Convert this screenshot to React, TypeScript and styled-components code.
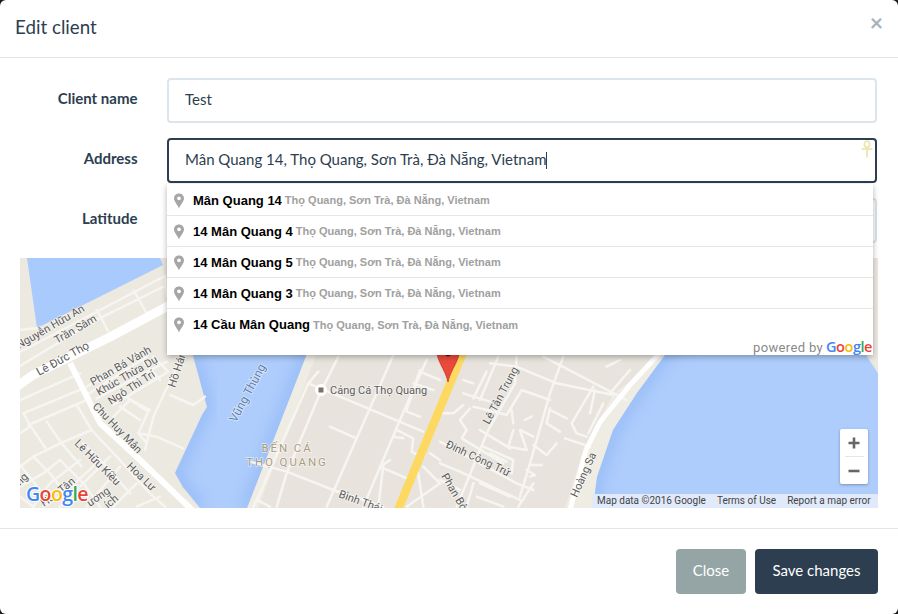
import React from "react";
import styled, { createGlobalStyle } from "styled-components";

const Global = createGlobalStyle`
  html, body { margin: 0; padding: 0; background: #1c1c1c; }
  #root { width: 898px; height: 614px; overflow: hidden; }
`;

const Modal = styled.div`
  width: 898px; height: 614px; background: #fff; border-radius: 6px; overflow: hidden;
  font-family: Lato, "Noto Sans", sans-serif; font-size: 15px; color: #2c3e50;
  display: flex; flex-direction: column;
`;
const Header = styled.header`
  box-sizing: border-box; height: 58px; display: flex; justify-content: space-between; align-items: flex-start;
  padding: 15px; border-bottom: 1px solid #e5e5e5;
`;
const Title = styled.h4`
  margin: 0; font-size: 18.75px; font-weight: 400; line-height: 24px;
`;
const CloseX = styled.span`
  font-size: 23px; font-weight: 700; line-height: 15px; color: #a9b2b8;
`;
const Body = styled.div`
  position: relative; padding: 20px; display: flex; flex-direction: column; gap: 15px;
`;
const Row = styled.div`
  display: grid; grid-template-columns: 147px 1fr; margin-right: 1px; height: 45px;
`;
const Label = styled.label`
  font-weight: 700; text-align: right; padding: 10px 29.5px 0 0; line-height: 21px;
`;
const Input = styled.input`
  box-sizing: border-box; width: 100%; height: 45px; padding: 0 16px 3px; border: 2px solid #dce4ec;
  border-radius: 4px; outline: none; background: #fff; color: #2c3e50;
  font-family: inherit; font-size: 15px;
`;
const FocusField = styled.div`
  position: relative; box-sizing: border-box; height: 45px; padding: 0 16px 3px; border: 2px solid #2c3e50;
  border-radius: 4px; display: flex; align-items: center; white-space: nowrap; font-size: 15px;
`;
const Caret = styled.span`
  display: inline-block; width: 1px; height: 17px; background: #2c3e50; margin-top: 3px;
`;
const AnkhIcon = styled.svg`
  position: absolute; right: 2px; top: 0; width: 12px; height: 18px;
`;
const Dropdown = styled.div`
  position: absolute; left: 167px; top: 126px; width: 706px; height: 171px; box-sizing: border-box; padding-top: 1px;
  background: #fff; z-index: 5; box-shadow: 0 2px 6px rgba(0,0,0,.3);
  font-family: "Liberation Sans", Arial, sans-serif; display: flex; flex-direction: column;
`;
const Option = styled.div`
  flex: none; height: 31px; box-sizing: border-box; display: flex; align-items: center; padding: 0 0 0 6px;
  border-bottom: 1px solid #e6e6e6; white-space: nowrap;
  &:nth-child(5) { border-bottom: 0; }
`;
const PinBox = styled.svg`
  width: 12px; height: 16px; margin: 1px 8px 0 0; flex: none;
`;
const MainText = styled.b`
  font-size: 13px; color: #000; margin-right: 3px;
`;
const SubText = styled.span`
  font-size: 11px; font-weight: 700; color: #a0a0a0;
`;
const Powered = styled.div`
  display: flex; justify-content: flex-end; align-items: baseline; padding: 0 1px 0 0; line-height: 13px;
  font-family: Roboto, sans-serif; font-size: 13px; color: #8a8a8a; letter-spacing: .35px;
`;
const Goog = styled.span`
  margin-left: 3px; font-family: "Open Sans", sans-serif; font-size: 14.5px; font-weight: 600; letter-spacing: -.45px;
`;
const Letter = styled.span<{ $c: string }>`color: ${p => p.$c};`;

const MapBox = styled.div`
  position: relative; height: 250px; overflow: hidden; background: #e8e4dd;
`;
const MapSvg = styled.svg`
  display: block; width: 858px; height: 250px;
`;
const Attribution = styled.div`
  position: absolute; right: 0; bottom: 0; width: 286px; height: 14px; box-sizing: border-box; background: #e1eafb;
  font-family: Roboto, sans-serif; font-size: 10px; line-height: 14px; color: #444; padding-left: 5px;
  display: flex; gap: 11px; white-space: nowrap;
`;
const Zoom = styled.div`
  position: absolute; left: 820px; top: 171px; width: 28px; height: 55px; background: #fff; border-radius: 2px;
  box-shadow: 0 1px 3px rgba(0,0,0,.3); display: flex; flex-direction: column; align-items: center;
`;
const ZoomBtn = styled.svg`
  width: 28px; height: 27px; display: block;
`;
const ZoomSep = styled.div`
  width: 19px; height: 1px; background: #e6e6e6;
`;
const Footer = styled.footer`
  margin-top: auto; border-top: 1px solid #e5e5e5; padding: 20px; display: flex; justify-content: flex-end; gap: 9px;
`;
const Btn = styled.button<{ $dark?: boolean }>`
  width: ${p => (p.$dark ? 123 : 70)}px; height: 45px; border: 0; border-radius: 4px; padding: 0 0 3px; color: #fff;
  font-family: inherit; font-size: 15px;
  background: ${p => (p.$dark ? "#2c3e50" : "#95a5a6")};
`;

const MapLabel = styled.text<{ $c?: string; $s?: number }>`
  font-family: Roboto, sans-serif; font-size: ${p => p.$s ?? 11}px; fill: ${p => p.$c ?? "#5b5b5b"};
  stroke: rgba(255,255,255,.55); stroke-width: 1.6px; paint-order: stroke;
`;
const DistrictLabel = styled.text`
  font-family: Roboto, sans-serif; font-size: 11.5px; letter-spacing: 1.9px; fill: #a99c82; text-anchor: middle;
  stroke: rgba(255,255,255,.6); stroke-width: 1.5px; paint-order: stroke;
`;
const GoogleMark = styled.text`
  font-family: "Open Sans", sans-serif; font-size: 19.5px; font-weight: 600; letter-spacing: -.6px;
  stroke: #fff; stroke-width: 2px; paint-order: stroke;
`;

const options = ["Mân Quang 14", "14 Mân Quang 4", "14 Mân Quang 5", "14 Mân Quang 3", "14 Cầu Mân Quang"];

const upper = [
  "20,352 100,310 165,276", "20,366 96,320 165,286", "97,310 108,331", "134,291 146,312", "165,276 167,296",
  "20,330 37,328",
];
const zoneLeft = [
  "0,150 180,70", "10,190 190,115", "25,225 200,150", "0,250 30,230", "200,110 310,50", "200,135 380,20",
  "230,145 440,35", "280,165 445,65", "10,190 30,225 80,300", "80,215 125,280 185,350", "170,165 215,240",
  "215,240 120,280 40,320 0,350", "40,320 90,370 130,420", "215,240 290,320 390,430 435,470",
  "280,200 330,150 385,185 355,250 380,280", "300,170 360,210", "325,145 390,180", "355,250 410,260 490,295",
  "480,30 400,200 375,300", "450,135 520,165 555,140", "0,410 70,370 120,330", "180,330 90,400 40,470",
  "230,340 120,440 70,470", "270,320 170,420 120,470", "300,350 200,470", "350,400 280,470", "420,440 350,470",
  "0,345 60,420", "90,370 150,450", "120,330 190,400 240,470", "190,280 260,350 330,430", "0,440 40,470",
  "440,60 400,20", "420,90 350,10",
];
const zoneMid = [
  "205,65 175,100 30,430 10,470", "265,20 210,130 110,370 80,470", "175,100 520,245", "430,15 230,470",
  "240,230 320,265", "0,335 110,365 250,420 400,470", "530,30 450,210 340,470", "510,60 470,180",
  "510,65 570,90", "490,100 550,120", "470,185 510,200", "440,240 490,265 485,305 510,320", "430,260 460,265",
  "420,330 390,350 470,385", "400,345 385,470", "520,350 570,400", "500,340 520,470", "470,470 570,400",
  "540,310 570,330", "20,450 60,470",
];
const zoneRight = [
  "175,20 120,150", "140,65 100,145", "230,20 225,100 145,240 50,470", "150,40 230,50 350,100 520,135",
  "370,20 330,130 270,340 240,440", "310,20 560,150", "70,90 100,100", "70,130 150,155", "0,190 40,190 70,165",
  "100,170 200,195 245,120 330,150", "60,210 90,175", "60,210 80,240 65,265 190,340", "0,275 230,400 280,420",
  "0,340 60,365 240,450", "120,240 210,295", "130,290 220,330 215,370", "150,310 200,335", "215,180 220,220",
  "255,210 275,200", "220,240 205,290 260,300 240,240 280,260", "280,285 320,315 350,280",
  "330,175 320,220 360,245", "330,180 380,205", "375,265 450,290", "460,110 395,220 410,250 440,260",
  "465,120 450,190", "490,160 445,250", "270,345 305,345", "260,360 285,375 270,380", "280,400 235,470",
  "100,400 80,470", "0,390 60,420", "500,50 540,30", "510,130 570,60", "120,400 210,440", "110,440 190,470",
];

const riverPts = "165,240 193,355 207,407 202,415 175,473 183,487 200,508 247,508 320,320 330,240";
const seaPts = "700,330 665,355 637,393 613,430 597,477 593,508 878,508 878,373 867,357 860,330";

export default function App() {
  return (
    <Modal>
      <Global />
      <Header>
        <Title>Edit client</Title>
        <CloseX>×</CloseX>
      </Header>
      <Body>
        <Row>
          <Label>Client name</Label>
          <Input defaultValue="Test" />
        </Row>
        <Row>
          <Label>Address</Label>
          <FocusField>
            Mân Quang 14, Thọ Quang, Sơn Trà, Đà Nẵng, Vietnam<Caret />
            <AnkhIcon viewBox="0 0 12 18">
              <g fill="none" stroke="#e9e7ae" strokeWidth="1.7">
                <ellipse cx="6" cy="4.2" rx="2.6" ry="3.2" />
                <path d="M0.5 9.2H11.5M6 7.4V17.5" />
              </g>
            </AnkhIcon>
          </FocusField>
        </Row>
        <Row>
          <Label>Latitude</Label>
          <Input />
        </Row>
        <Dropdown>
          {options.map(t => (
            <Option key={t}>
              <PinBox viewBox="0 0 12 16">
                <path fill="#a6a6a6" fillRule="evenodd" d="M6 0.5C2.9 0.5 1 2.7 1 5.3 1 8.6 4.6 11.8 6 15.5 7.4 11.8 11 8.6 11 5.3 11 2.7 9.1 0.5 6 0.5ZM6 3.4a1.9 1.9 0 1 1 0 3.8 1.9 1.9 0 0 1 0-3.8Z" />
              </PinBox>
              <MainText>{t}</MainText>
              <SubText>Thọ Quang, Sơn Trà, Đà Nẵng, Vietnam</SubText>
            </Option>
          ))}
          <Powered>
            powered by
            <Goog>
              <Letter $c="#4285f4">G</Letter><Letter $c="#ea4335">o</Letter><Letter $c="#fbbc05">o</Letter>
              <Letter $c="#4285f4">g</Letter><Letter $c="#34a853">l</Letter><Letter $c="#ea4335">e</Letter>
            </Goog>
          </Powered>
        </Dropdown>
        <MapBox>
          <MapSvg viewBox="20 258 858 250">
            <defs>
              <clipPath id="riverClip"><polygon points={riverPts} /></clipPath>
              <clipPath id="seaClip"><polygon points={seaPts} /></clipPath>
              <filter id="soft" x="-30%" y="-30%" width="160%" height="160%"><feGaussianBlur stdDeviation="7" /></filter>
            </defs>
            <rect x="20" y="258" width="858" height="250" fill="#e8e4dd" />
            <polygon points="20,258 27,258 37,328 163,265 170,300 190,350 210,410 204,420 178,475 182,488 205,508 20,508" fill="#ece9e1" />
            <polygon points="310,340 247,508 258,508 320,345" fill="#efece4" />
            <polygon points="680,340 613,395 585,445 565,508 596,508 600,470 625,415 700,340" fill="#efece4" />
            <polygon points="27,258 160,258 163,265 37,328" fill="#a9cafc" />
            <polygon points={riverPts} fill="#aecdfc" />
            <g clipPath="url(#riverClip)">
              <polyline points="193,355 207,407 202,415 175,473 183,487 200,508" fill="none" stroke="#8db4f4" strokeWidth="12" filter="url(#soft)" opacity=".7" />
              <polyline points="320,320 247,508" fill="none" stroke="#8db4f4" strokeWidth="12" filter="url(#soft)" opacity=".7" />
            </g>
            <polygon points={seaPts} fill="#aecdfc" />
            <g clipPath="url(#seaClip)">
              <polyline points="700,330 665,355 637,393 613,430 597,477 593,508" fill="none" stroke="#8db4f4" strokeWidth="12" filter="url(#soft)" opacity=".7" />
            </g>
            <polygon points="873,258 878,258 878,373 867,355" fill="#ece9e1" />
            <g fill="none" stroke="#f7f5f1" strokeLinejoin="round" strokeLinecap="round">
              <g strokeWidth="2.4">{upper.map(p => <polyline key={p} points={p} />)}</g>
              <g transform="translate(20 350) scale(.3333)" strokeWidth="7.5">{zoneLeft.map(p => <polyline key={p} points={p} />)}</g>
              <g transform="translate(250 350) scale(.3333)" strokeWidth="7.5">{zoneMid.map(p => <polyline key={p} points={p} />)}</g>
              <g transform="translate(440 350) scale(.3333)" strokeWidth="7.5">{zoneRight.map(p => <polyline key={p} points={p} />)}</g>
            </g>
            <g fill="none" stroke="#fff" strokeLinejoin="round">
              <polyline points="16,387 33,375 110,337 170,305" strokeWidth="9" />
              <polyline points="70,363 100,423 140,460 192,510" strokeWidth="6" />
              <polyline points="667,345 630,385 600,422 586,450 570,510" strokeWidth="5" />
            </g>
            <polyline points="466,345 398,510" fill="none" stroke="#fdd962" strokeWidth="8.5" />
            <path d="M436,345 H460 C460,362 451,368 448,382 C445,368 436,362 436,345Z" fill="#ea4a3c" stroke="#c9392b" strokeWidth=".8" />
            <circle cx="448" cy="354" r="2.5" fill="#5a1510" />
            <circle cx="321" cy="390" r="6" fill="#fff" />
            <rect x="318.5" y="387.5" width="5" height="5" fill="#7d7169" />
            <MapLabel x="330" y="394">Cảng Cá Thọ Quang</MapLabel>
            <MapLabel transform="translate(19,349) rotate(-30)">Nguyễn Hữu An</MapLabel>
            <MapLabel transform="translate(57,344) rotate(-30)">Trần Sâm</MapLabel>
            <MapLabel transform="translate(39,376) rotate(-29)" $s={11.5}>Lê Đức Thọ</MapLabel>
            <MapLabel transform="translate(93,386) rotate(-30)">Phan Bá Vành</MapLabel>
            <MapLabel transform="translate(99,396) rotate(-30)">Khúc Thừa Dụ</MapLabel>
            <MapLabel transform="translate(111,405) rotate(-33)">Ngô Thì Trí</MapLabel>
            <MapLabel transform="translate(175,388) rotate(-72)">Hồ Hán</MapLabel>
            <MapLabel transform="translate(92,407) rotate(46)">Chu Huy Mân</MapLabel>
            <MapLabel transform="translate(74,444) rotate(45)">Lê Hữu Kiều</MapLabel>
            <MapLabel transform="translate(126,467) rotate(44)">Hoa Lư</MapLabel>
            <MapLabel transform="translate(62,494) rotate(-40)">Tân</MapLabel>
            <MapLabel transform="translate(20,486) rotate(-45)">ng</MapLabel>
            <MapLabel transform="translate(44,507) rotate(-35)">Hồ</MapLabel>
            <MapLabel transform="translate(90,507) rotate(-35)">ương</MapLabel>
            <MapLabel transform="translate(108,509) rotate(-40)">ích</MapLabel>
            <MapLabel transform="translate(236,423) rotate(-62)" $c="#5f7ea6" $s={12}>Vũng Thùng</MapLabel>
            <DistrictLabel x="287" y="452">BẾN CÁ</DistrictLabel>
            <DistrictLabel x="287" y="466">THỌ QUANG</DistrictLabel>
            <MapLabel transform="translate(338,497) rotate(20)">Bình Thái</MapLabel>
            <MapLabel transform="translate(489,425) rotate(-62)">Lê Tân Trung</MapLabel>
            <MapLabel transform="translate(445,447) rotate(25)">Đinh Công Trứ</MapLabel>
            <MapLabel transform="translate(441,476) rotate(60)">Phan Bội</MapLabel>
            <MapLabel transform="translate(577,498) rotate(-66)">Hoàng Sa</MapLabel>
            <GoogleMark x="26" y="501">
              <tspan fill="#4285f4">G</tspan><tspan fill="#ea4335">o</tspan><tspan fill="#fbbc05">o</tspan>
              <tspan fill="#4285f4">g</tspan><tspan fill="#34a853">l</tspan><tspan fill="#ea4335">e</tspan>
            </GoogleMark>
          </MapSvg>
          <Attribution>
            <span>Map data ©2016 Google</span><span>Terms of Use</span><span>Report a map error</span>
          </Attribution>
          <Zoom>
            <ZoomBtn viewBox="0 0 28 27"><path d="M8.5 14h11M14 8.5v11" stroke="#666" strokeWidth="2.6" /></ZoomBtn>
            <ZoomSep />
            <ZoomBtn viewBox="0 0 28 27"><path d="M8.5 14h11" stroke="#666" strokeWidth="2.6" /></ZoomBtn>
          </Zoom>
        </MapBox>
      </Body>
      <Footer>
        <Btn>Close</Btn>
        <Btn $dark>Save changes</Btn>
      </Footer>
    </Modal>
  );
}
